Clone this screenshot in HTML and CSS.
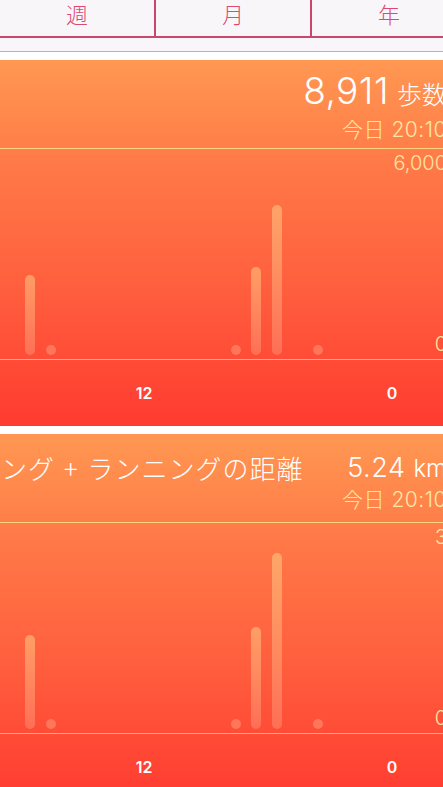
FILE: index.html
```html
<!DOCTYPE html>
<html lang="ja">
<head>
<meta charset="utf-8">
<title>ヘルスケア</title>
<link rel="stylesheet" href="styles.css">
</head>
<body>
<div class="page">
  <nav class="segments">
    <div class="seg">週</div>
    <div class="seg">月</div>
    <div class="seg">年</div>
  </nav>
  <div class="band"></div>
  <div class="white-gap"></div>

  <section class="card">
    <header class="card-head">
      <div class="title"></div>
      <div class="value-block">
        <div class="value"><span class="num num-lg">8,911</span><span class="unit unit-cjk">歩数</span></div>
        <div class="time">今日 20:10</div>
      </div>
    </header>
    <div class="chart">
      <div class="ylabel ymax">6,000</div>
      <div class="bars">
        <div class="slot"><div class="bar" style="height:80px"></div></div>
        <div class="slot"><div class="dot"></div></div>
        <div class="slot"></div><div class="slot"></div><div class="slot"></div><div class="slot"></div>
        <div class="slot"></div><div class="slot"></div><div class="slot"></div><div class="slot"></div>
        <div class="slot"><div class="dot"></div></div>
        <div class="slot"><div class="bar" style="height:88px"></div></div>
        <div class="slot"><div class="bar" style="height:150px"></div></div>
        <div class="slot"></div>
        <div class="slot"><div class="dot"></div></div>
      </div>
      <div class="ylabel ymin">0</div>
    </div>
    <div class="xaxis"><span>12</span><span>0</span></div>
  </section>

  <section class="card card-second">
    <header class="card-head card-head-long">
      <div class="title">ング + ランニングの距離</div>
      <div class="value-block">
        <div class="value"><span class="num num-md">5.24</span><span class="unit unit-latin">km</span></div>
        <div class="time">今日 20:10</div>
      </div>
    </header>
    <div class="chart">
      <div class="ylabel ymax">3</div>
      <div class="bars">
        <div class="slot"><div class="bar" style="height:94px"></div></div>
        <div class="slot"><div class="dot"></div></div>
        <div class="slot"></div><div class="slot"></div><div class="slot"></div><div class="slot"></div>
        <div class="slot"></div><div class="slot"></div><div class="slot"></div><div class="slot"></div>
        <div class="slot"><div class="dot"></div></div>
        <div class="slot"><div class="bar" style="height:102px"></div></div>
        <div class="slot"><div class="bar" style="height:176px"></div></div>
        <div class="slot"></div>
        <div class="slot"><div class="dot"></div></div>
      </div>
      <div class="ylabel ymin">0</div>
    </div>
    <div class="xaxis"><span>12</span><span>0</span></div>
  </section>
</div>
</body>
</html>
```
FILE: styles.css
```css
html, body {
  margin: 0;
  padding: 0;
  overflow: hidden;
  background: #ffffff;
}

body {
  font-family: Inter, "Noto Sans CJK JP", sans-serif;
  color: #ffffff;
}

.page {
  width: 460px;
}

/* segmented control */
.segments {
  display: grid;
  grid-template-columns: repeat(3, 156px);
  width: 468px;
  background: #f9f6fa;
  border-bottom: 2px solid #c9466d;
}

.seg {
  height: 36px;
  box-sizing: border-box;
  line-height: 27px;
  text-align: center;
  font-family: "Noto Sans CJK JP", sans-serif;
  font-size: 22px;
  font-weight: 300;
  color: #dc4a74;
  border-right: 2px solid #c9466d;
}

.band {
  height: 13px;
  background: #f9f6fa;
  border-bottom: 1px solid #b4b4b4;
}

.white-gap {
  height: 8px;
  background: #ffffff;
}

/* cards */
.card {
  background: linear-gradient(180deg, #ff9852 0%, #ff7847 30%, #ff5f3e 62%, #ff3b30 100%);
}

.card-second {
  margin-top: 8px;
  height: 366px;
}

.card-head {
  display: flex;
  align-items: flex-start;
  justify-content: space-between;
  box-sizing: border-box;
  height: 89px;
  padding: 11px 13px 0 0;
  border-bottom: 1px solid rgba(255, 226, 140, 0.85);
}

.card-head-long {
  padding-top: 14px;
}

.title {
  font-family: "Noto Sans CJK JP", sans-serif;
  font-size: 26px;
  font-weight: 300;
  letter-spacing: 1px;
  word-spacing: 2px;
  line-height: 40px;
  white-space: nowrap;
  padding-left: 1px;
}

.value-block {
  text-align: right;
  white-space: nowrap;
}

.value {
  display: flex;
  align-items: baseline;
  justify-content: flex-end;
  line-height: 40px;
}

.num {
  font-weight: 300;
  letter-spacing: 0.5px;
}

.num-lg {
  font-size: 37px;
}

.num-md {
  font-size: 27px;
}

.unit {
  margin-left: 8px;
  font-weight: 300;
}

.unit-cjk {
  font-family: "Noto Sans CJK JP", sans-serif;
  font-size: 25px;
}

.unit-latin {
  font-size: 24px;
}

.time {
  margin-top: 6px;
  font-family: Inter, "Noto Sans CJK JP", sans-serif;
  font-size: 21px;
  font-weight: 300;
  letter-spacing: 0.5px;
  line-height: 22px;
  color: #ffe7a3;
}

.card-head-long .time {
  margin-top: 0;
}

/* chart */
.chart {
  position: relative;
  height: 210px;
  border-bottom: 1px solid rgba(255, 196, 150, 0.8);
  display: flex;
  align-items: flex-end;
}

.ylabel {
  position: absolute;
  right: 13px;
  font-size: 20px;
  font-weight: 300;
  line-height: 22px;
  color: #ffe3a3;
}

.ymax {
  top: 3px;
}

.ymin {
  bottom: 4px;
}

.bars {
  display: grid;
  grid-template-columns: repeat(15, 20.57px);
  align-items: end;
  padding: 0 0 4px 19.7px;
}

.slot {
  display: flex;
  justify-content: center;
  align-items: flex-end;
}

.bar {
  width: 10px;
  border-radius: 5px;
  background: linear-gradient(0deg, rgba(255, 180, 150, 0.32), rgba(255, 214, 140, 0.5));
}

.dot {
  width: 10px;
  height: 10px;
  border-radius: 50%;
  background: rgba(255, 185, 150, 0.38);
}

.xaxis {
  display: grid;
  grid-template-columns: 48px 48px;
  column-gap: 200px;
  padding-left: 120px;
  height: 66px;
  line-height: 66px;
  font-size: 16px;
  font-weight: 600;
  text-align: center;
}
```
